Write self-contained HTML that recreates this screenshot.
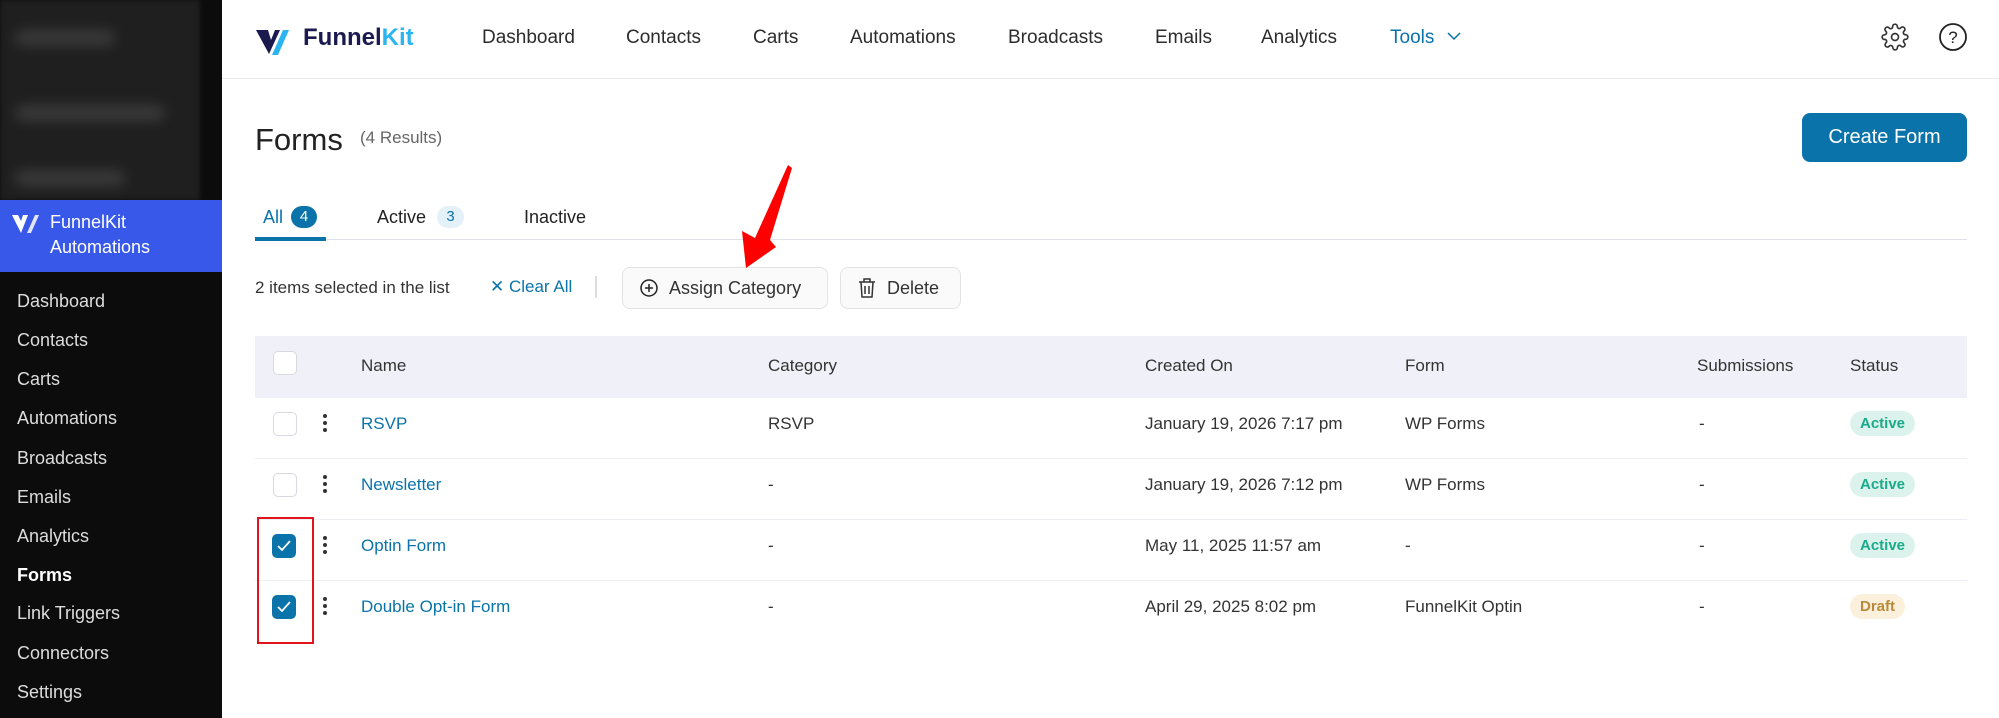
<!DOCTYPE html>
<html><head><meta charset="utf-8"><style>
*{box-sizing:border-box;margin:0;padding:0}
body{width:1999px;height:718px;overflow:hidden;background:#fff;font-family:"Liberation Sans",sans-serif;position:relative;color:#1e1e1e}
.abs{position:absolute}
.side{left:0;top:0;width:222px;height:718px;background:#0c0c0c}
.blur{left:0;top:0;width:200px;height:200px;background:#1f1f1f;filter:blur(2px)}
.bl{background:#3a3a3a;height:16px;border-radius:8px;filter:blur(6px)}
.brand{left:0;top:200px;width:222px;height:72px;background:#3858e9;color:#fff;font-size:18px;line-height:25px}
.mi{left:17px;color:#ddd;font-size:18px;line-height:20px}
.nav{top:27px;font-size:19px;color:#2c2c2c}
.hdr{left:222px;top:78px;right:0;height:1px;background:#ececec}
.th{font-size:17px;color:#333;top:356px}
.cb{width:24px;height:24px;border:1.5px solid #d8d8e0;border-radius:5px;background:#fff}
.cb.on{background:#0a73aa;border-color:#0a73aa}
.dots{width:4px}
.dots i{display:block;width:4px;height:4px;border-radius:2px;background:#333;margin-bottom:3px}
.link{color:#0a73aa;font-size:17px}
.cell{font-size:17px;color:#333}
.badge{font-size:15px;font-weight:bold;padding:4px 10px;border-radius:14px}
.act{background:#dbf3ec;color:#1aab8a}
.dr{background:#fbf0db;color:#b88a3a}
.btn{border:1.5px solid #e3e3e3;border-radius:8px;background:#fafafa;font-size:18px;color:#333;display:flex;align-items:center;gap:10px;padding-left:16px}
</style></head><body>
<div class="abs side"></div>
<div class="abs blur">
 <div class="abs bl" style="left:15px;top:30px;width:100px"></div>
 <div class="abs bl" style="left:15px;top:105px;width:150px"></div>
 <div class="abs bl" style="left:15px;top:170px;width:110px"></div>
</div>
<div class="abs brand">
 <svg class="abs" style="left:11px;top:13px" width="30" height="22" viewBox="0 0 30 22"><path d="M1 2 L10 20 L17 2 L12 2 L10 8 L7 2Z" fill="#fff"/><path d="M20 20 L28 2 L24 2 L16 20Z" fill="#fff" opacity=".85"/></svg>
 <div class="abs" style="left:50px;top:10px">FunnelKit<br>Automations</div>
</div>
<div class="abs mi" style="top:291px">Dashboard</div>
<div class="abs mi" style="top:330px">Contacts</div>
<div class="abs mi" style="top:369px">Carts</div>
<div class="abs mi" style="top:408px">Automations</div>
<div class="abs mi" style="top:448px">Broadcasts</div>
<div class="abs mi" style="top:487px">Emails</div>
<div class="abs mi" style="top:526px">Analytics</div>
<div class="abs mi" style="top:565px;color:#fff;font-weight:bold">Forms</div>
<div class="abs mi" style="top:603px">Link Triggers</div>
<div class="abs mi" style="top:643px">Connectors</div>
<div class="abs mi" style="top:682px">Settings</div>

<svg class="abs" style="left:256px;top:28px" width="40" height="40" viewBox="0 0 40 40"><path d="M0 2 L12 2 L15 12 L19 2 L24 2 L13 26 Z" fill="#1a1a4e"/><path d="M27 2 L33 2 L22 27 L16 27 Z" fill="#2bb5f0"/></svg>
<div class="abs" style="left:303px;top:24px;font-size:24px;font-weight:bold;color:#1a1a4e">Funnel<span style="color:#2bb5f0">Kit</span></div>
<div class="abs nav" style="left:482px">Dashboard</div>
<div class="abs nav" style="left:626px">Contacts</div>
<div class="abs nav" style="left:753px">Carts</div>
<div class="abs nav" style="left:850px">Automations</div>
<div class="abs nav" style="left:1008px">Broadcasts</div>
<div class="abs nav" style="left:1155px">Emails</div>
<div class="abs nav" style="left:1261px">Analytics</div>
<div class="abs nav" style="left:1390px;color:#0a73aa">Tools</div>
<svg class="abs" style="left:1447px;top:31px" width="14" height="10" viewBox="0 0 14 10"><path d="M1 2 L7 8 L13 2" fill="none" stroke="#0a73aa" stroke-width="1.5"/></svg>
<svg class="abs" style="left:1881px;top:22px" width="28" height="30" viewBox="0 0 24 24" fill="none" stroke="#333" stroke-width="1.4"><circle cx="12" cy="12" r="3"/><path d="M19.4 15a1.7 1.7 0 0 0 .3 1.8l.1.1a2 2 0 1 1-2.8 2.8l-.1-.1a1.7 1.7 0 0 0-1.8-.3 1.7 1.7 0 0 0-1 1.5V21a2 2 0 1 1-4 0v-.1a1.7 1.7 0 0 0-1.1-1.5 1.7 1.7 0 0 0-1.8.3l-.1.1a2 2 0 1 1-2.8-2.8l.1-.1a1.7 1.7 0 0 0 .3-1.8 1.7 1.7 0 0 0-1.5-1H3a2 2 0 1 1 0-4h.1a1.7 1.7 0 0 0 1.5-1.1 1.7 1.7 0 0 0-.3-1.8l-.1-.1a2 2 0 1 1 2.8-2.8l.1.1a1.7 1.7 0 0 0 1.8.3H9a1.7 1.7 0 0 0 1-1.5V3a2 2 0 1 1 4 0v.1a1.7 1.7 0 0 0 1 1.5 1.7 1.7 0 0 0 1.8-.3l.1-.1a2 2 0 1 1 2.8 2.8l-.1.1a1.7 1.7 0 0 0-.3 1.8V9a1.7 1.7 0 0 0 1.5 1H21a2 2 0 1 1 0 4h-.1a1.7 1.7 0 0 0-1.5 1z"/></svg>
<svg class="abs" style="left:1938px;top:22px" width="30" height="30" viewBox="0 0 30 30"><circle cx="15" cy="15" r="13" fill="none" stroke="#222" stroke-width="1.8"/><text x="15" y="21" text-anchor="middle" font-size="17" font-family="Liberation Sans" fill="#222">?</text></svg>
<div class="abs hdr"></div>

<div class="abs" style="left:255px;top:122px;font-size:31px;color:#222">Forms</div>
<div class="abs" style="left:360px;top:128px;font-size:17px;color:#666">(4 Results)</div>
<div class="abs" style="left:1802px;top:113px;width:165px;height:49px;background:#0a73aa;border-radius:8px;color:#fff;font-size:20px;text-align:center;line-height:49px">Create Form</div>

<div class="abs" style="left:263px;top:207px;font-size:18px;color:#0a73aa">All</div>
<div class="abs" style="left:291px;top:206px;width:26px;height:22px;border-radius:11px;background:#0a73aa;color:#fff;font-size:15px;text-align:center;line-height:22px">4</div>
<div class="abs" style="left:377px;top:207px;font-size:18px;color:#222">Active</div>
<div class="abs" style="left:437px;top:206px;width:27px;height:22px;border-radius:11px;background:#e4f1f8;color:#0a73aa;font-size:15px;text-align:center;line-height:22px">3</div>
<div class="abs" style="left:524px;top:207px;font-size:18px;color:#222">Inactive</div>
<div class="abs" style="left:255px;top:239px;width:1712px;height:1px;background:#e0e0ea"></div>
<div class="abs" style="left:255px;top:237px;width:71px;height:4px;background:#0a73aa"></div>

<div class="abs" style="left:255px;top:278px;font-size:17px;color:#333">2 items selected in the list</div>
<div class="abs" style="left:490px;top:277px;font-size:17px;color:#0a73aa">✕ Clear All</div>
<div class="abs" style="left:595px;top:276px;width:2px;height:22px;background:#ddd"></div>
<div class="abs btn" style="left:622px;top:267px;width:206px;height:42px"><svg width="20" height="20" viewBox="0 0 20 20"><circle cx="10" cy="10" r="8" fill="none" stroke="#222" stroke-width="1.5"/><path d="M10 6v8M6 10h8" stroke="#222" stroke-width="1.5"/></svg>Assign Category</div>
<div class="abs btn" style="left:840px;top:267px;width:121px;height:42px"><svg width="20" height="22" viewBox="0 0 20 22" fill="none" stroke="#333" stroke-width="1.5"><path d="M2 5h16M7 5V2h6v3M4 5l1 15h10l1-15M8 9v8M12 9v8"/></svg>Delete</div>

<div class="abs" style="left:255px;top:336px;width:1712px;height:62px;background:#f0f1f8"></div>
<div class="abs cb" style="left:273px;top:351px"></div>
<div class="abs th" style="left:361px">Name</div>
<div class="abs th" style="left:768px">Category</div>
<div class="abs th" style="left:1145px">Created On</div>
<div class="abs th" style="left:1405px">Form</div>
<div class="abs th" style="left:1697px">Submissions</div>
<div class="abs th" style="left:1850px">Status</div>
<div class="abs" style="left:255px;top:458px;width:1712px;height:1px;background:#eeeef5"></div>
<div class="abs" style="left:255px;top:519px;width:1712px;height:1px;background:#eeeef5"></div>
<div class="abs" style="left:255px;top:580px;width:1712px;height:1px;background:#eeeef5"></div>

<div class="abs cb" style="left:273px;top:412px"></div>
<div class="abs dots" style="left:323px;top:414px"><i></i><i></i><i></i></div>
<div class="abs link" style="left:361px;top:414px">RSVP</div>
<div class="abs cell" style="left:768px;top:414px">RSVP</div>
<div class="abs cell" style="left:1145px;top:414px">January 19, 2026 7:17 pm</div>
<div class="abs cell" style="left:1405px;top:414px">WP Forms</div>
<div class="abs cell" style="left:1699px;top:414px">-</div>
<div class="abs badge act" style="left:1850px;top:411px">Active</div>

<div class="abs cb" style="left:273px;top:473px"></div>
<div class="abs dots" style="left:323px;top:475px"><i></i><i></i><i></i></div>
<div class="abs link" style="left:361px;top:475px">Newsletter</div>
<div class="abs cell" style="left:768px;top:475px">-</div>
<div class="abs cell" style="left:1145px;top:475px">January 19, 2026 7:12 pm</div>
<div class="abs cell" style="left:1405px;top:475px">WP Forms</div>
<div class="abs cell" style="left:1699px;top:475px">-</div>
<div class="abs badge act" style="left:1850px;top:472px">Active</div>

<div class="abs cb on" style="left:272px;top:534px"><svg width="21" height="21" viewBox="0 0 21 21"><path d="M5 11l4 4 8-9" fill="none" stroke="#fff" stroke-width="1.8"/></svg></div>
<div class="abs dots" style="left:323px;top:536px"><i></i><i></i><i></i></div>
<div class="abs link" style="left:361px;top:536px">Optin Form</div>
<div class="abs cell" style="left:768px;top:536px">-</div>
<div class="abs cell" style="left:1145px;top:536px">May 11, 2025 11:57 am</div>
<div class="abs cell" style="left:1405px;top:536px">-</div>
<div class="abs cell" style="left:1699px;top:536px">-</div>
<div class="abs badge act" style="left:1850px;top:533px">Active</div>

<div class="abs cb on" style="left:272px;top:595px"><svg width="21" height="21" viewBox="0 0 21 21"><path d="M5 11l4 4 8-9" fill="none" stroke="#fff" stroke-width="1.8"/></svg></div>
<div class="abs dots" style="left:323px;top:597px"><i></i><i></i><i></i></div>
<div class="abs link" style="left:361px;top:597px">Double Opt-in Form</div>
<div class="abs cell" style="left:768px;top:597px">-</div>
<div class="abs cell" style="left:1145px;top:597px">April 29, 2025 8:02 pm</div>
<div class="abs cell" style="left:1405px;top:597px">FunnelKit Optin</div>
<div class="abs cell" style="left:1699px;top:597px">-</div>
<div class="abs badge dr" style="left:1850px;top:594px">Draft</div>

<div class="abs" style="left:257px;top:517px;width:57px;height:127px;border:2.5px solid #e0151b"></div>
<svg class="abs" style="left:0;top:0" width="1999" height="718"><path d="M788 165 L792 168 L770 240 L776 247 L746 268 L742 231 L755 238 Z" fill="#f00"/></svg>
</body></html>
